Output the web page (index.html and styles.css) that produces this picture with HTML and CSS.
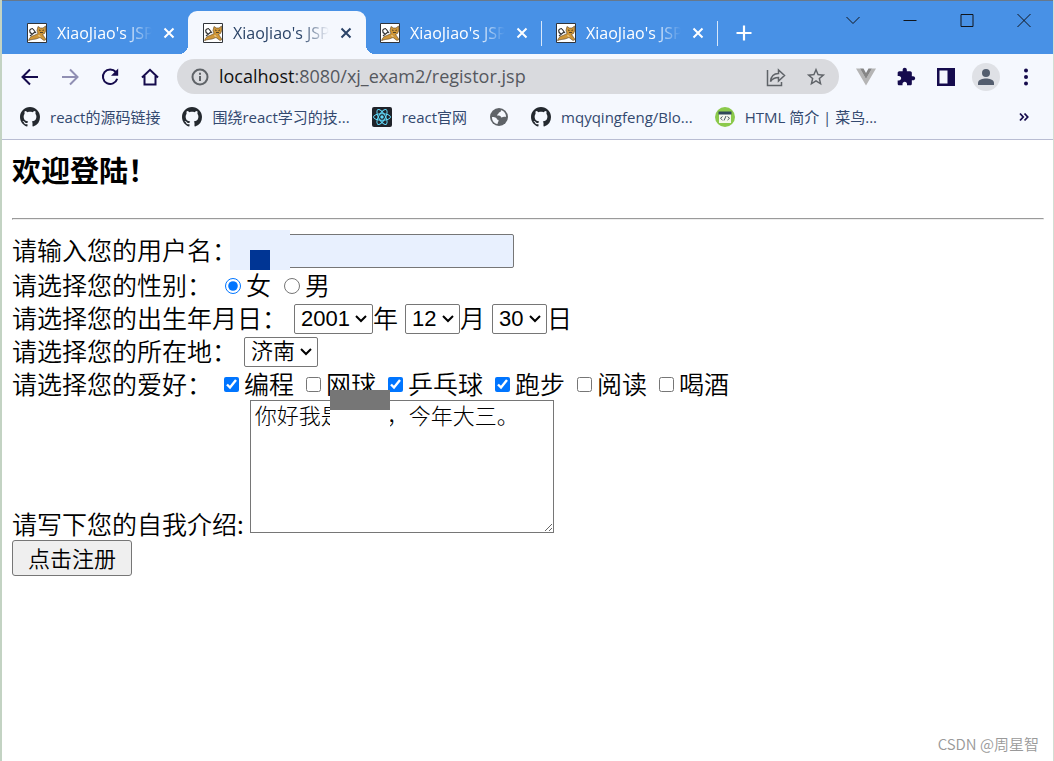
FILE: index.html
```html
<!DOCTYPE html>
<html lang="zh-CN">
<head>
<meta charset="utf-8">
<title>XiaoJiao's JSP</title>
<link rel="stylesheet" href="styles.css">
</head>
<body>
<svg class="defs" aria-hidden="true">
  <symbol id="cat" viewBox="0 0 20 20">
    <path d="M.5.5h19v19H.5z" fill="#fff" stroke="#30343a"/>
    <path d="M5 11C1.500 9 2 5.500 6 5.500M6 6l3 4M3 13l5-4" fill="none" stroke="#333" stroke-width="1.200"/>
    <path d="M1.500 17.500c1-3 3-4.500 5.500-5l4-2-1-3 1-4 2.500 1.500h2.500L18.500 3l.5 4-1.500 3.500-2 1 1.500 2 2 3-2 1-4-3-4 1.500c-3 .500-5 .500-7 1.500z" fill="#cf9638" stroke="#5b4526" stroke-width=".6"/>
    <path d="M12 7l1.500.5M17 7l-1.500.5M13 9.500h3" stroke="#332d22" stroke-width=".8"/>
    <path d="M11 13l3 1-2-2z" fill="#f5dfae"/>
  </symbol>
  <symbol id="x" viewBox="0 0 12 12"><path d="M1.500 1.500l9 9m0-9l-9 9" fill="none" stroke="currentColor" stroke-width="2"/></symbol>
  <symbol id="github" viewBox="0 0 16 16"><path fill="#24292f" d="M8 0C3.580 0 0 3.580 0 8c0 3.540 2.290 6.530 5.470 7.590.4.070.55-.17.55-.38 0-.19-.01-.82-.01-1.490-2.010.37-2.530-.49-2.690-.94-.09-.23-.48-.94-.82-1.130-.28-.15-.68-.52-.01-.53.63-.01 1.080.58 1.230.82.72 1.210 1.870.87 2.330.66.07-.52.28-.87.51-1.070-1.780-.2-3.640-.89-3.640-3.950 0-.87.31-1.590.82-2.150-.08-.2-.36-1.020.08-2.120 0 0 .67-.21 2.200.82.64-.18 1.320-.27 2-.27s1.360.09 2 .27c1.530-1.040 2.200-.82 2.200-.82.44 1.100.16 1.920.08 2.120.51.56.82 1.270.82 2.150 0 3.070-1.870 3.750-3.650 3.950.29.25.54.73.54 1.480 0 1.070-.01 1.930-.01 2.200 0 .21.15.46.55.38A8.010 8.010 0 0 0 16 8c0-4.420-3.580-8-8-8z"/></symbol>
</svg>

<header class="chrome">
  <div class="titlebar">
    <nav class="tabs" aria-label="标签页">
      <div class="tab"><svg class="favicon"><use href="#cat"/></svg><span class="tab-title">XiaoJiao's JSP</span><button class="close" aria-label="关闭标签页"><svg><use href="#x"/></svg></button></div>
      <div class="tab active"><svg class="favicon"><use href="#cat"/></svg><span class="tab-title">XiaoJiao's JSP</span><button class="close" aria-label="关闭标签页"><svg><use href="#x"/></svg></button></div>
      <div class="tab divided"><svg class="favicon"><use href="#cat"/></svg><span class="tab-title">XiaoJiao's JSP</span><button class="close" aria-label="关闭标签页"><svg><use href="#x"/></svg></button></div>
      <div class="tab divided"><svg class="favicon"><use href="#cat"/></svg><span class="tab-title">XiaoJiao's JSP</span><button class="close" aria-label="关闭标签页"><svg><use href="#x"/></svg></button></div>
      <button class="new-tab" aria-label="新标签页"><svg viewBox="0 0 16 16" width="16" height="16"><path d="M8 .5v15M.5 8h15" stroke="#fff" stroke-width="2.200"/></svg></button>
    </nav>
    <div class="window-controls">
      <button aria-label="搜索标签页"><svg viewBox="0 0 14 14"><path d="M.5 4L7 10.500 13.500 4"/></svg></button>
      <button aria-label="最小化"><svg viewBox="0 0 14 14"><path d="M.5 7.500h13"/></svg></button>
      <button aria-label="最大化"><svg viewBox="0 0 14 14"><path d="M1 1.500h12v12H1z"/></svg></button>
      <button aria-label="关闭"><svg viewBox="0 0 14 14"><path d="M.5 1l13 13m0-13l-13 13"/></svg></button>
    </div>
  </div>

  <div class="toolbar">
    <button class="tool" aria-label="后退"><svg viewBox="0 0 20 20"><path class="line" d="M18 10H3M10 2.500L2.500 10l7.500 7.500"/></svg></button>
    <button class="tool faded" aria-label="前进"><svg viewBox="0 0 20 20"><path class="line" d="M2 10h15M10 2.500l7.500 7.500-7.500 7.500"/></svg></button>
    <button class="tool" aria-label="重新加载"><svg viewBox="0 0 20 20"><path class="line" d="M15.800 5A7.300 7.300 0 1 0 17.200 11.800"/><path fill="currentColor" d="M18.200 1.500v7.200H11z"/></svg></button>
    <button class="tool" aria-label="主页"><svg viewBox="0 0 20 20"><path class="line" d="M2 10.500L10 2.800l8 7.700M4.500 9v8.500h11V9"/></svg></button>
    <div class="omnibox">
      <svg class="info" viewBox="0 0 18 18"><circle cx="9" cy="9" r="7.500" fill="none" stroke="#5f6368" stroke-width="2"/><path d="M9 8v5M9 4.800v2" stroke="#5f6368" stroke-width="2"/></svg>
      <div class="url"><span class="host">localhost</span>:8080/xj_exam2/registor.jsp</div>
      <button class="omni-btn" aria-label="分享"><svg viewBox="0 0 20 20"><path d="M1.500 3v15.500H15.500V15M4.500 14.500c.5-5 3-8 8-8V3l6 5.500-6 5.500v-3.500c-3.500 0-6 1-8 4z" fill="none" stroke="#5f6368" stroke-width="1.500"/></svg></button>
      <button class="omni-btn" aria-label="收藏"><svg class="star" viewBox="0 0 24 24"><path fill="#5f6368" d="M22 9.240l-7.190-.62L12 2 9.190 8.630 2 9.240l5.460 4.730L5.820 21 12 17.270 18.180 21l-1.630-7.030L22 9.240zM12 15.400l-3.760 2.270 1-4.280-3.320-2.880 4.380-.38L12 6.100l1.710 4.040 4.380.38-3.320 2.880 1 4.280L12 15.400z"/></svg></button>
    </div>
    <button class="tool" aria-label="Vue"><svg viewBox="0 0 20 20"><path d="M0 1.500h4L10 12l6-10.500h4L10 18.500z" fill="#b5b5b5"/><path d="M4 1.500h3.500L10 6l2.500-4.500H16L10 12z" fill="#868686"/></svg></button>
    <button class="tool" aria-label="扩展程序"><svg viewBox="0 0 24 24"><path fill="currentColor" d="M20.500 11H19V7c0-1.100-.9-2-2-2h-4V3.500C13 2.120 11.880 1 10.500 1S8 2.120 8 3.500V5H4c-1.100 0-1.990.9-1.990 2v3.800H3.500c1.490 0 2.700 1.210 2.700 2.700s-1.210 2.700-2.700 2.700H2V20c0 1.100.9 2 2 2h3.800v-1.500c0-1.490 1.210-2.700 2.700-2.700s2.700 1.210 2.700 2.700V22H17c1.100 0 2-.9 2-2v-4h1.500c1.380 0 2.500-1.120 2.500-2.500S21.880 11 20.500 11z"/></svg></button>
    <button class="tool" aria-label="侧边栏"><svg viewBox="0 0 20 20"><path fill="currentColor" d="M1 1h18v18H1zM3.500 3.500v13h8v-13z" fill-rule="evenodd"/></svg></button>
    <button class="tool avatar" aria-label="用户"><svg viewBox="0 0 28 28"><circle cx="14" cy="14" r="14" fill="#dfe1e6"/><circle cx="14" cy="10" r="4" fill="#535d6e"/><path d="M6 22v-2c0-3.500 5-4.500 8-4.500s8 1 8 4.500v2z" fill="#535d6e"/></svg></button>
    <button class="tool" aria-label="菜单"><svg viewBox="0 0 20 20"><g fill="currentColor"><circle cx="10" cy="3.500" r="2"/><circle cx="10" cy="10" r="2"/><circle cx="10" cy="16.500" r="2"/></g></svg></button>
  </div>

  <nav class="bookmarks" aria-label="书签">
    <a href="#"><svg><use href="#github"/></svg>react的源码链接</a>
    <a href="#"><svg><use href="#github"/></svg>围绕react学习的技...</a>
    <a href="#"><svg viewBox="0 0 20 20"><rect width="20" height="20" rx="2" fill="#20232a"/><g fill="none" stroke="#61dafb" stroke-width="1"><ellipse cx="10" cy="10" rx="8.500" ry="3.300"/><ellipse cx="10" cy="10" rx="8.500" ry="3.300" transform="rotate(60 10 10)"/><ellipse cx="10" cy="10" rx="8.500" ry="3.300" transform="rotate(120 10 10)"/></g><circle cx="10" cy="10" r="1.700" fill="#61dafb"/></svg>react官网</a>
    <a href="#" aria-label="网页"><svg viewBox="0 0 20 20"><circle cx="10" cy="10" r="9" fill="#5f6368"/><path d="M11 3c2 0 1 2-1 2.500-.5 2-2 1.500-2 3 2 0 4 0 4 2 2 0 3-1 5-.5.3-3-2-7-6-7zM3 10c2 0 5 .5 5 2.500 2 0 2 1.500 1 2.500l-.5 2C5 16.500 3 14 3 10z" fill="#f5f8fe"/></svg></a>
    <a href="#"><svg><use href="#github"/></svg>mqyqingfeng/Blo...</a>
    <a href="#"><svg viewBox="0 0 20 20"><circle cx="10" cy="10" r="10" fill="#8bc94b"/><path d="M4 5h12v11H4z" fill="#f4f7ed"/><path d="M3.500 4.500h13v3h-13z" fill="#2f4858"/><path d="M7.500 9.500l-2 1.800 2 1.800M12.500 9.500l2 1.800-2 1.800M11 9l-2 4.500" fill="none" stroke="#4a5a60"/></svg>HTML 简介 | 菜鸟...</a>
    <button class="more" aria-label="更多书签"><svg viewBox="0 0 10 10"><path d="M1 1.500L4.200 5 1 8.500M5.500 1.500L8.700 5 5.500 8.500" fill="none" stroke="#150b4d" stroke-width="1.800"/></svg></button>
  </nav>
</header>

<main class="page">
  <h3>欢迎登陆！</h3>
  <hr>
  <form>
    <div class="row user-row">
      <label for="user">请输入您的用户名：</label>
      <input class="text" id="user" type="text">
      <span class="mask name-mask"></span>
    </div>
    <div class="row">
      <span class="caption">请选择您的性别：</span>
      <label class="choice radio"><input type="radio" name="sex" checked>女</label>
      <label class="choice radio"><input type="radio" name="sex">男</label>
    </div>
    <div class="row dates">
      <label for="year">请选择您的出生年月日：</label>
      <span class="pick"><select id="year" class="wide"><option>2001</option></select>年</span>
      <span class="pick"><select aria-label="月"><option>12</option></select>月</span>
      <span class="pick"><select aria-label="日"><option>30</option></select>日</span>
    </div>
    <div class="row dates">
      <label for="city">请选择您的所在地：</label>
      <span class="pick"><select id="city" class="city"><option>济南</option></select></span>
    </div>
    <div class="row">
      <span class="caption">请选择您的爱好：</span>
      <label class="choice"><input type="checkbox" checked>编程</label>
      <label class="choice"><input type="checkbox">网球</label>
      <label class="choice"><input type="checkbox" checked>乒乓球</label>
      <label class="choice"><input type="checkbox" checked>跑步</label>
      <label class="choice"><input type="checkbox">阅读</label>
      <label class="choice"><input type="checkbox">喝酒</label>
    </div>
    <div class="row intro-row">
      <label for="intro">请写下您的自我介绍:</label>
      <div class="intro">
        <textarea id="intro">你好我是　　，今年大三。</textarea>
        <span class="mask intro-mask"></span>
      </div>
    </div>
    <button class="submit" type="button">点击注册</button>
  </form>
  <div class="watermark">CSDN @周星智</div>
</main>
</body>
</html>
```
FILE: styles.css
```css
* { box-sizing: border-box; }

body {
  margin: 0;
  min-height: 100vh;
  display: flex;
  flex-direction: column;
  border-left: 2px solid #c3d3c3;
  border-right: 1px solid #d3ddd3;
  background: #fff;
  color: #000;
  font-family: "Noto Sans CJK SC", sans-serif;
  font-weight: 350;
}

.defs { display: none; }

button {
  border: 0;
  padding: 0;
  background: none;
  color: inherit;
}

.chrome {
  background: #f5f8fe;
  border-bottom: 1px solid #b9bdd3;
  font-family: "Open Sans", "Noto Sans CJK SC", sans-serif;
  font-weight: 400;
}

/* Title bar */
.titlebar {
  display: flex;
  justify-content: space-between;
  height: 54px;
  border-top: 1px solid #66788c;
  background: #4891e6;
}

.tabs {
  display: flex;
  align-items: flex-end;
  padding-left: 10px;
}

.tab {
  position: relative;
  display: flex;
  align-items: center;
  width: 176px;
  height: 43px;
  padding: 0 13px 0 15px;
  color: #fff;
  font-size: 16px;
}

.favicon { width: 20px; height: 20px; flex: none; }

.tab-title {
  flex: 1;
  min-width: 0;
  margin: 0 11px 0 10px;
  overflow: hidden;
  white-space: nowrap;
  mask-image: linear-gradient(to right, #000 70%, transparent);
}

.close { display: flex; }
.close svg { width: 12px; height: 12px; }

.tab.active {
  width: 178px;
  padding-right: 14px;
  border-radius: 9px 9px 0 0;
  background: #f5f8fe;
  color: #2b4468;
}

.tab.active::before,
.tab.active::after {
  content: "";
  position: absolute;
  bottom: 0;
  width: 9px;
  height: 9px;
}

.tab.active::before {
  right: 100%;
  background: radial-gradient(circle at 0 0, transparent 9px, #f5f8fe 9px);
}

.tab.active::after {
  left: 100%;
  background: radial-gradient(circle at 100% 0, transparent 9px, #f5f8fe 9px);
}

.tab.divided { padding: 0 14px; }

.tab.divided::after {
  content: "";
  position: absolute;
  right: 0;
  top: 10px;
  width: 1px;
  height: 25px;
  background: #d7e7fa;
}

.new-tab {
  display: flex;
  align-items: center;
  height: 43px;
  margin-left: 18px;
}

.window-controls {
  display: flex;
  height: 37px;
  padding-right: 1px;
}

.window-controls button {
  display: flex;
  align-items: center;
  justify-content: center;
  width: 57px;
}

.window-controls svg {
  width: 14px;
  height: 14px;
  fill: none;
  stroke: #10151c;
}

/* Toolbar */
.toolbar {
  display: flex;
  align-items: center;
  padding: 5px 7px 0 8px;
  color: #150b4d;
}

.tool {
  display: flex;
  align-items: center;
  justify-content: center;
  width: 40px;
  height: 28px;
}

.tool svg { width: 20px; height: 20px; }
.tool.avatar svg { width: 28px; height: 28px; }
.tool.faded { color: #908fb3; }
.line { fill: none; stroke: currentColor; stroke-width: 2; }

.omnibox {
  flex: 1;
  display: flex;
  align-items: center;
  height: 35px;
  margin: 0 7px;
  padding: 0 3px 0 14px;
  border-radius: 18px;
  background: #d9dade;
}

.info { width: 18px; height: 18px; }

.url {
  flex: 1;
  padding: 0 0 2px 10px;
  color: #55585e;
  font-size: 18px;
}

.host { color: #111; }

.omni-btn {
  display: flex;
  align-items: center;
  justify-content: center;
  width: 40px;
}

.omni-btn svg { width: 20px; height: 20px; }
.omni-btn .star { width: 22px; height: 22px; }

/* Bookmarks */
.bookmarks {
  display: flex;
  align-items: center;
  gap: 22px;
  height: 45px;
  padding: 0 24px 0 18px;
}

.bookmarks a {
  display: flex;
  align-items: center;
  gap: 10px;
  color: #33496f;
  font-size: 15px;
  text-decoration: none;
  white-space: nowrap;
}

.bookmarks a svg { width: 20px; height: 20px; }
.more { display: flex; margin-left: auto; }
.more svg { width: 10px; height: 10px; }

/* Page */
.page {
  position: relative;
  flex: 1;
  padding: 11px 9px 11px 10px;
}

h3 {
  margin: 0;
  font-size: 29px;
  line-height: 36px;
}

hr { margin: 31px 0 11px; }

.row {
  position: relative;
  display: flex;
  align-items: center;
  height: 33px;
  font-size: 25px;
  line-height: 31px;
  white-space: nowrap;
}

.row label,
.caption,
.pick { padding-bottom: 2px; }

.user-row { height: 38px; }

.text {
  width: 277px;
  height: 34px;
  margin: 2px 0 0;
  border: 1px solid #767676;
  border-radius: 2px;
  background: #e8f0fe;
  font-size: 22px;
}

.mask { position: absolute; width: 60px; height: 40px; }

.name-mask {
  left: 218px;
  top: -1px;
  background: linear-gradient(#003594, #003594) 20px 20px / 20px 20px no-repeat #e8f0fe;
}

.choice {
  display: flex;
  align-items: center;
  gap: 5px;
  margin-left: 12px;
}

.choice.radio { margin-left: 13px; }

.choice input {
  width: 15px;
  height: 15px;
  margin: 2px 0 0;
}

.choice.radio input { width: 16px; height: 16px; }

.dates { gap: 7px; }
.pick { display: flex; align-items: center; }

select {
  width: 55px;
  height: 30px;
  margin: 2px 0 0;
  padding: 0 0 0 6px;
  appearance: none;
  border: 1px solid #767676;
  border-radius: 2px;
  background: #fff url("data:image/svg+xml,%3Csvg xmlns='http://www.w3.org/2000/svg' width='12' height='8'%3E%3Cpath d='M1 1l5 5 5-5' fill='none' stroke='black' stroke-width='2'/%3E%3C/svg%3E") right 5px center no-repeat;
  color: #000;
  font-family: "Liberation Sans", "Noto Sans CJK SC", sans-serif;
  font-size: 22px;
  font-weight: 350;
}

select.wide { width: 79px; }
select.city { width: 74px; }

.intro-row {
  align-items: flex-end;
  gap: 6px;
  height: auto;
  margin-top: -1px;
  line-height: 30px;
}

.intro { position: relative; display: flex; margin-bottom: 7px; }

textarea {
  width: 304px;
  height: 133px;
  margin: 0;
  padding: 1px 4px;
  border: 1px solid #767676;
  font-family: "Noto Sans CJK SC", sans-serif;
  font-size: 22px;
  font-weight: 300;
  line-height: 25px;
}

.intro-mask {
  left: 80px;
  top: -10px;
  background: linear-gradient(#767676 50%, #fff 50%);
}

.submit {
  display: block;
  height: 36px;
  padding: 0 15px 2px;
  border: 1px solid #767676;
  border-radius: 3px;
  background: #efefef;
  color: #000;
  font-family: "Noto Sans CJK SC", sans-serif;
  font-size: 22px;
  font-weight: 350;
}

.watermark {
  position: absolute;
  right: 14px;
  bottom: 7px;
  color: #999;
  font-size: 15px;
  line-height: 20px;
}
```
